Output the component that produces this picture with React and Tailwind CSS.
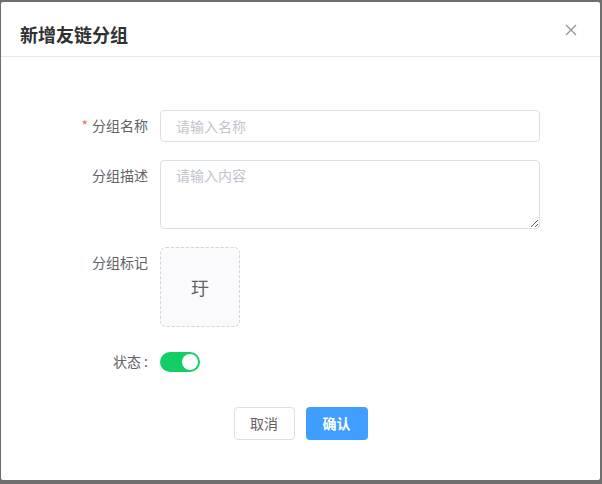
const font = { fontFamily: '"Noto Sans CJK SC", "Noto Sans", sans-serif' };

function FormRow({ label, required, children, className = '' }) {
    return (
        <div className={`flex ${className}`}>
            <label className="w-[112px] shrink-0 pr-3 text-right text-[14px] leading-[30px] text-[#606266]">
                {required && <span className="mr-1 text-[#f56c6c]">*</span>}
                {label}
            </label>
            <div className="w-[380px]">{children}</div>
        </div>
    );
}

export default function App() {
    return (
        <div className="h-[484px] w-[602px] bg-[#6e6e6e] pl-px pt-[2px] pr-[2px] pb-[4px]" style={font}>
            <div className="h-full w-full rounded-[2px] bg-white">
                {/* Header */}
                <div className="flex items-start justify-between border-b border-[#e8e8e8] pl-[19px] pr-[23px] pt-5 pb-[10px]">
                    <h2 className="text-[18px] font-bold leading-6 text-[#303133]">新增友链分组</h2>
                    <button className="mt-[2px] text-[#909399]" aria-label="close">
                        <svg width="12" height="12" viewBox="0 0 12 12" fill="none" stroke="currentColor" strokeWidth="1.2">
                            <path d="M1 1l10 10M11 1L1 11" />
                        </svg>
                    </button>
                </div>

                {/* Form */}
                <div className="pl-[47px] pt-[53px]">
                    <FormRow label="分组名称" required className="mb-[18px]">
                        <input
                            className="h-8 w-full rounded-[4px] border border-[#dcdfe6] px-[15px] text-[14px] text-[#606266] outline-none placeholder:text-[#c0c4cc]"
                            placeholder="请输入名称"
                        />
                    </FormRow>
                    <FormRow label="分组描述" className="mb-[18px]">
                        <textarea
                            className="block h-[69px] w-full rounded-[4px] border border-[#dcdfe6] px-[15px] py-[3px] text-[14px] leading-[22px] text-[#606266] outline-none placeholder:text-[#c0c4cc]"
                            placeholder="请输入内容"
                        />
                    </FormRow>
                    <FormRow label="分组标记" className="mb-[19px]">
                        <div className="flex h-20 w-20 items-center justify-center rounded-[6px] border border-dashed border-[#d3d4d8] bg-[#fafafc] text-[18px] text-[#606266]">
                            玗
                        </div>
                    </FormRow>
                    <FormRow label="状态 :">
                        <div className="flex h-8 items-center">
                            <div className="flex h-5 w-10 items-center justify-end rounded-full bg-[#13ce66] px-[2px]">
                                <div className="h-4 w-4 rounded-full bg-white" />
                            </div>
                        </div>
                    </FormRow>
                </div>

                {/* Footer */}
                <div className="mt-[29px] flex justify-center gap-[11px]">
                    <button className="h-[33px] w-[61px] rounded-[4px] border border-[#dcdfe6] bg-white text-[14px] text-[#606266]">
                        取消
                    </button>
                    <button className="h-[33px] w-[62px] rounded-[4px] bg-[#409eff] text-[14px] font-bold text-white">
                        确认
                    </button>
                </div>
            </div>
        </div>
    );
}
